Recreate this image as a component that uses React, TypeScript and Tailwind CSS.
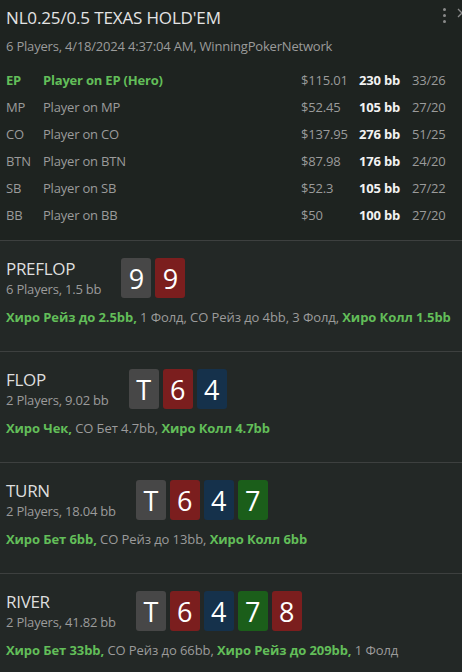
import React from "react";

type Player = {
  pos: string;
  name: string;
  stack: string;
  bb: string;
  stats: string;
  hero?: boolean;
};

type Card = { rank: string; color: "grey" | "red" | "blue" | "green" };

type Part = { text: string; hero?: boolean };

type Street = {
  name: string;
  info: string;
  cards: Card[];
  actions: Part[];
};

const players: Player[] = [
  { pos: "EP", name: "Player on EP (Hero)", stack: "$115.01", bb: "230 bb", stats: "33/26", hero: true },
  { pos: "MP", name: "Player on MP", stack: "$52.45", bb: "105 bb", stats: "27/20" },
  { pos: "CO", name: "Player on CO", stack: "$137.95", bb: "276 bb", stats: "51/25" },
  { pos: "BTN", name: "Player on BTN", stack: "$87.98", bb: "176 bb", stats: "24/20" },
  { pos: "SB", name: "Player on SB", stack: "$52.3", bb: "105 bb", stats: "27/22" },
  { pos: "BB", name: "Player on BB", stack: "$50", bb: "100 bb", stats: "27/20" },
];

const streets: Street[] = [
  {
    name: "PREFLOP",
    info: "6 Players, 1.5 bb",
    cards: [
      { rank: "9", color: "grey" },
      { rank: "9", color: "red" },
    ],
    actions: [
      { text: "Хиро Рейз до 2.5bb,", hero: true },
      { text: " 1 Фолд, CO Рейз до 4bb, 3 Фолд, " },
      { text: "Хиро Колл 1.5bb", hero: true },
    ],
  },
  {
    name: "FLOP",
    info: "2 Players, 9.02 bb",
    cards: [
      { rank: "T", color: "grey" },
      { rank: "6", color: "red" },
      { rank: "4", color: "blue" },
    ],
    actions: [
      { text: "Хиро Чек,", hero: true },
      { text: " CO Бет 4.7bb, " },
      { text: "Хиро Колл 4.7bb", hero: true },
    ],
  },
  {
    name: "TURN",
    info: "2 Players, 18.04 bb",
    cards: [
      { rank: "T", color: "grey" },
      { rank: "6", color: "red" },
      { rank: "4", color: "blue" },
      { rank: "7", color: "green" },
    ],
    actions: [
      { text: "Хиро Бет 6bb,", hero: true },
      { text: " CO Рейз до 13bb, " },
      { text: "Хиро Колл 6bb", hero: true },
    ],
  },
  {
    name: "RIVER",
    info: "2 Players, 41.82 bb",
    cards: [
      { rank: "T", color: "grey" },
      { rank: "6", color: "red" },
      { rank: "4", color: "blue" },
      { rank: "7", color: "green" },
      { rank: "8", color: "red" },
    ],
    actions: [
      { text: "Хиро Бет 33bb,", hero: true },
      { text: " CO Рейз до 66bb, " },
      { text: "Хиро Рейз до 209bb,", hero: true },
      { text: " 1 Фолд" },
    ],
  },
];

const cardBg = {
  grey: "bg-[#474747]",
  red: "bg-[#7b1e1e]",
  blue: "bg-[#15314b]",
  green: "bg-[#1b5e1a]",
};

function PlayingCard({ card }: { card: Card }) {
  return (
    <div
      className={`${cardBg[card.color]} w-[30px] h-[40px] rounded-[3px] flex items-center justify-center text-[27px] text-white leading-none`}
    >
      {card.rank}
    </div>
  );
}

export default function App() {
  return (
    <div
      className="w-[462px] h-[672px] overflow-hidden bg-[#232826] text-[#9b9b9b]"
      style={{ fontFamily: '"Open Sans", "Noto Sans", sans-serif' }}
    >
      <div className="bg-[#1e2320] px-[6px] pt-[5px] h-[240px] relative">
        <div className="absolute right-[16px] top-[8px] flex flex-col gap-[3px]">
          <span className="w-[3px] h-[3px] rounded-full bg-[#8a8a8a]" />
          <span className="w-[3px] h-[3px] rounded-full bg-[#8a8a8a]" />
          <span className="w-[3px] h-[3px] rounded-full bg-[#8a8a8a]" />
        </div>
        <svg className="absolute right-[-5px] top-[8px]" width="10" height="10" viewBox="0 0 10 10">
          <path d="M1 1 L9 9 M9 1 L1 9" stroke="#8a8a8a" strokeWidth="1.3" />
        </svg>
        <h1 className="text-[17px] leading-[26px] text-[#e4e4e4] tracking-[-0.15px]">NL0.25/0.5 TEXAS HOLD'EM</h1>
        <div className="text-[13px] leading-[20px] mt-[5px] tracking-[-0.2px]">
          6 Players, 4/18/2024 4:37:04 AM, WinningPokerNetwork
        </div>
        <div className="mt-[11px] flex flex-col">
          {players.map((p) => (
            <div key={p.pos} className="flex items-center h-[27px] text-[13px] tracking-[-0.2px]">
              <div className={`w-[37px] ${p.hero ? "text-[#62be59] font-bold" : ""}`}>{p.pos}</div>
              <div className={`flex-1 ${p.hero ? "text-[#62be59] font-bold" : ""}`}>{p.name}</div>
              <div className="w-[56px]">{p.stack}</div>
              <div className="w-[43px] text-right text-[#f2f2f2] font-bold">{p.bb}</div>
              <div className="w-[44px] ml-[12px]">{p.stats}</div>
            </div>
          ))}
        </div>
      </div>

      {streets.map((s) => (
        <div key={s.name} className="border-t border-[#3d403f] px-[6px] pt-[17px] pb-[25px]">
          <div className="flex items-center h-[40px]">
            <div className="flex flex-col">
              <div className="text-[17px] leading-[22px] text-[#dedede] tracking-[-0.3px]">{s.name}</div>
              <div className="text-[13px] leading-[18px] tracking-[-0.2px]">{s.info}</div>
            </div>
            <div className="flex gap-[4px] ml-[20px]">
              {s.cards.map((c, i) => (
                <PlayingCard key={i} card={c} />
              ))}
            </div>
          </div>
          <div className="mt-[10px] text-[13px] leading-[18px] whitespace-nowrap tracking-[-0.08px]">
            {s.actions.map((a, i) => (
              <span key={i} className={a.hero ? "text-[#62be59] font-bold" : ""}>
                {a.text}
              </span>
            ))}
          </div>
        </div>
      ))}
    </div>
  );
}
